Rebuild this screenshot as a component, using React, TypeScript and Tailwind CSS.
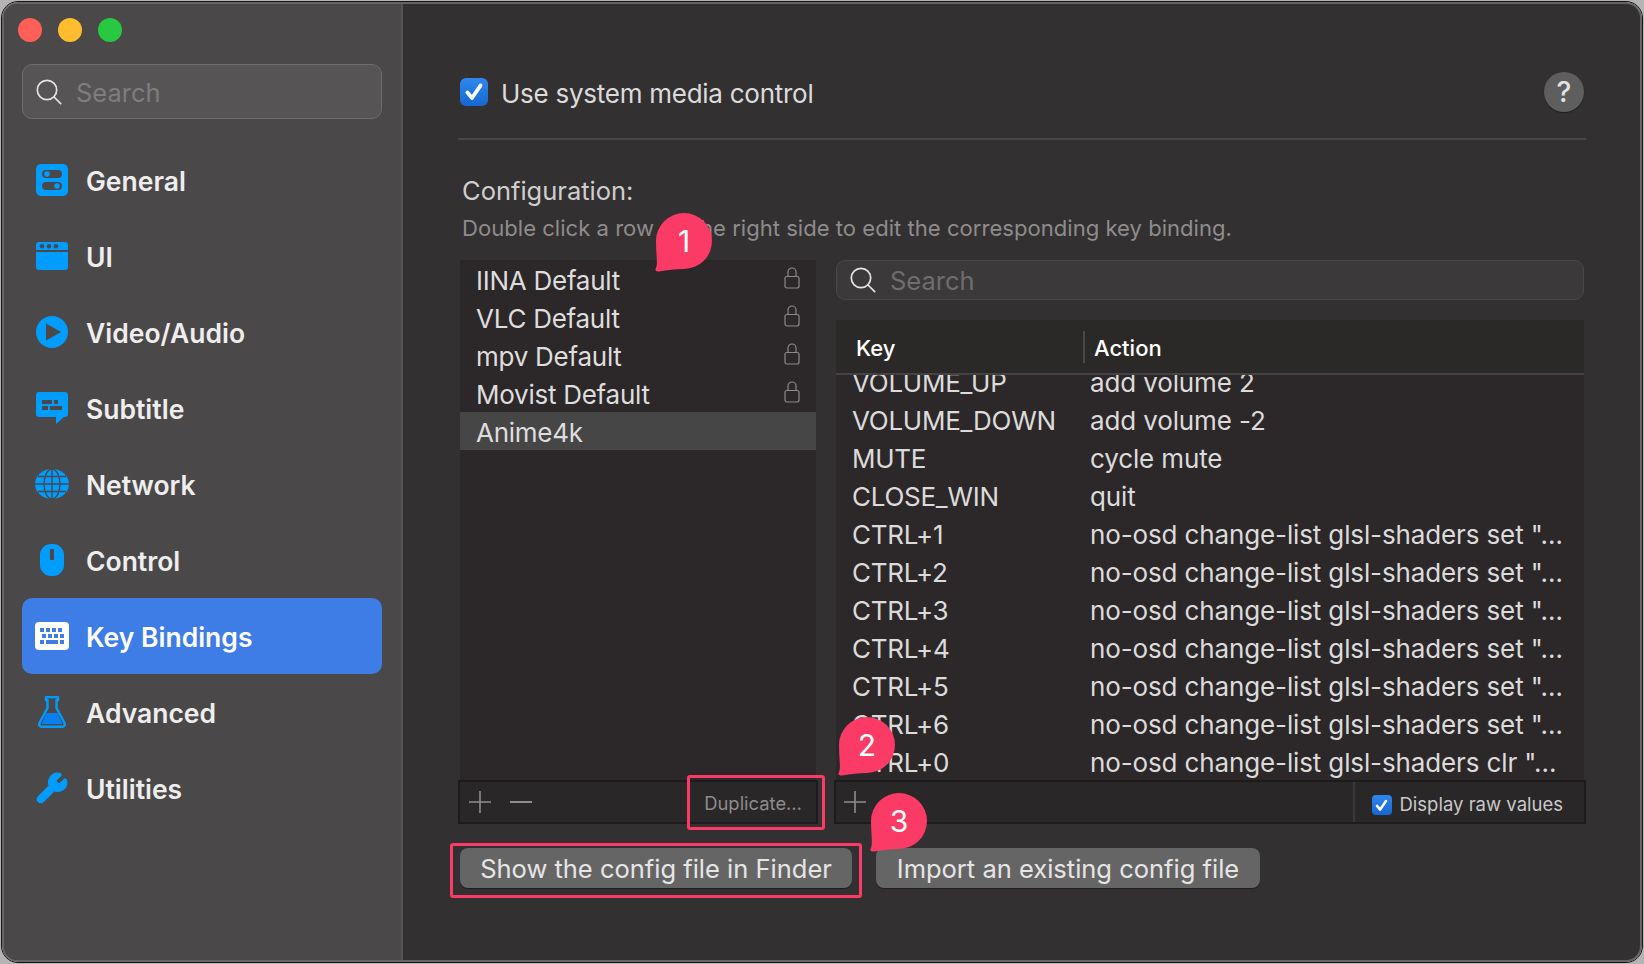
import { Wrench } from 'lucide-react'
import type { ReactNode } from 'react'

const DARK = '#4b4849'
const BLUE = '#009dff'

const GeneralIcon = () => (
  <svg width="32" height="32" viewBox="0 0 32 32">
    <rect width="32" height="32" rx="5" fill={BLUE} />
    <rect x="6" y="6" width="20" height="8" rx="4" fill={DARK} />
    <circle cx="11" cy="10" r="2.8" fill={BLUE} />
    <rect x="6" y="18" width="20" height="8" rx="4" fill={DARK} />
    <circle cx="21" cy="22" r="2.8" fill={BLUE} />
  </svg>
)

const UiIcon = () => (
  <svg width="32" height="28" viewBox="0 0 32 28">
    <path d="M3 0h26a3 3 0 0 1 3 3v5H0V3a3 3 0 0 1 3-3z" fill={BLUE} />
    <path d="M0 10h32v15a3 3 0 0 1-3 3H3a3 3 0 0 1-3-3z" fill={BLUE} />
    <circle cx="6" cy="4.300" r="2.3" fill={DARK} />
    <circle cx="13" cy="4.300" r="2.3" fill={DARK} />
    <circle cx="20" cy="4.300" r="2.3" fill={DARK} />
  </svg>
)

const PlayIcon = () => (
  <svg width="32" height="32" viewBox="0 0 32 32">
    <circle cx="16" cy="16" r="16" fill={BLUE} />
    <path d="M10 7.500 25 16 10 24.500z" fill={DARK} />
  </svg>
)

const SubtitleIcon = () => (
  <svg width="32" height="32" viewBox="0 0 32 32">
    <path d="M3 0h26a3 3 0 0 1 3 3v19a3 3 0 0 1-3 3h-1l-8 7v-7H3a3 3 0 0 1-3-3V3a3 3 0 0 1 3-3z" fill={BLUE} />
    <rect x="6" y="8" width="10" height="4" fill={DARK} />
    <rect x="18" y="8" width="4" height="4" fill={DARK} />
    <rect x="6" y="14" width="6" height="4" fill={DARK} />
    <rect x="14" y="14" width="12" height="4" fill={DARK} />
  </svg>
)

const GlobeIcon = () => (
  <svg width="34" height="30" viewBox="0 0 34 30">
    <ellipse cx="17" cy="15" rx="17" ry="15" fill={BLUE} />
    <g fill="none" stroke={DARK} strokeWidth="1.4">
      <ellipse cx="17" cy="15" rx="8" ry="15" />
      <path d="M17 0v30M3 7.500h28M0 15h34M3 22.500h28" />
    </g>
  </svg>
)

const MouseIcon = () => (
  <svg width="24" height="32" viewBox="0 0 24 32">
    <rect width="24" height="32" rx="11" fill={BLUE} />
    <rect x="10" y="5" width="4" height="11" rx="1" fill={DARK} />
  </svg>
)

const KeyboardIcon = () => {
  const keys = [
    [5, 6, 4], [11, 6, 4], [17, 6, 4], [23, 6, 4],
    [7, 12, 4], [13, 12, 4], [19, 12, 4], [25, 12, 4],
    [5, 18, 4], [11, 18, 12], [25, 18, 4],
  ]
  return (
    <svg width="34" height="28" viewBox="0 0 34 28">
      <rect width="34" height="28" rx="4" fill="#ffffff" />
      {keys.map(([x, y, w]) => (
        <rect key={`${x}-${y}`} x={x} y={y} width={w} height="4" fill="#3f7ce6" />
      ))}
    </svg>
  )
}

const FlaskIcon = () => (
  <svg width="28" height="32" viewBox="0 0 28 32">
    <path d="M8 1h12v3h-1.500v8L26.500 27a2.600 2.600 0 0 1-2.300 3.800H3.800A2.600 2.600 0 0 1 1.500 27L9.500 12V4H8z" fill="none" stroke={BLUE} strokeWidth="2.4" strokeLinejoin="round" />
    <path d="M8.500 17h11l5 11H3.500z" fill="#0a7fee" />
  </svg>
)

const nav: { label: string; icon: ReactNode; active?: boolean }[] = [
  { label: 'General', icon: <GeneralIcon /> },
  { label: 'UI', icon: <UiIcon /> },
  { label: 'Video/Audio', icon: <PlayIcon /> },
  { label: 'Subtitle', icon: <SubtitleIcon /> },
  { label: 'Network', icon: <GlobeIcon /> },
  { label: 'Control', icon: <MouseIcon /> },
  { label: 'Key Bindings', icon: <KeyboardIcon />, active: true },
  { label: 'Advanced', icon: <FlaskIcon /> },
  { label: 'Utilities', icon: <Wrench size={36} strokeWidth={1.6} fill={BLUE} color={BLUE} /> },
]

const presets = [
  { name: 'IINA Default', locked: true },
  { name: 'VLC Default', locked: true },
  { name: 'mpv Default', locked: true },
  { name: 'Movist Default', locked: true },
  { name: 'Anime4k', selected: true },
]

const SET = 'no-osd change-list glsl-shaders set "…'
const bindings = [
  ['VOLUME_UP', 'add volume 2'],
  ['VOLUME_DOWN', 'add volume -2'],
  ['MUTE', 'cycle mute'],
  ['CLOSE_WIN', 'quit'],
  ['CTRL+1', SET],
  ['CTRL+2', SET],
  ['CTRL+3', SET],
  ['CTRL+4', SET],
  ['CTRL+5', SET],
  ['CTRL+6', SET],
  ['CTRL+0', 'no-osd change-list glsl-shaders clr "…'],
]

const SearchGlyph = () => (
  <svg width="26" height="26" viewBox="0 0 26 26" fill="none" stroke="#e4e3e3" strokeWidth="1.7" strokeLinecap="round">
    <circle cx="11" cy="11" r="9.700" />
    <path d="M18 18l6.700 6.700" />
  </svg>
)

const LockGlyph = () => (
  <svg width="16" height="22" viewBox="0 0 16 22" fill="none" stroke="#8b8989" strokeWidth="1.2">
    <rect x="1" y="9.500" width="14" height="11.500" rx="2" />
    <path d="M4 9.500V5a4 4 0 0 1 8 0v4.500" />
  </svg>
)

const CheckBox = ({ size }: { size: 'lg' | 'sm' }) => (
  <span
    className={
      size === 'lg'
        ? 'flex h-[28px] w-[28px] items-center justify-center rounded-[6px] bg-linear-to-b from-[#2f88ee] to-[#1667d0]'
        : 'flex h-[20px] w-[20px] items-center justify-center rounded-[4px] bg-linear-to-b from-[#2f88ee] to-[#1667d0]'
    }
  >
    <svg
      width={size === 'lg' ? 22 : 15}
      height={size === 'lg' ? 22 : 15}
      viewBox="0 0 20 20"
      fill="none"
      stroke="#ffffff"
      strokeWidth="3.4"
      strokeLinecap="round"
      strokeLinejoin="round"
    >
      <path d="M4 10.500l4.200 5L16 4" />
    </svg>
  </span>
)

const PlusGlyph = () => (
  <svg width="22" height="22" viewBox="0 0 22 22" stroke="#8f8d8d" strokeWidth="1.6">
    <path d="M11 0v22M0 11h22" />
  </svg>
)

const Bubble = ({ n, className }: { n: number; className: string }) => (
  <div className={`absolute flex h-[60px] w-[60px] ${className}`}>
    <svg width="60" height="60" viewBox="0 0 60 60" className="absolute inset-0">
      <path
        d="M31 1a28 28 0 1 1 0 56c-8 0-17 1-25 2.500-3 .5-4.500-1.500-3-3.500C5 52 3 42 3 29A28 28 0 0 1 31 1z"
        fill="#fb3a65"
      />
    </svg>
    <span className="relative ml-[3px] mt-[1px] flex h-[56px] w-[56px] items-center justify-center text-[30px] leading-none text-white">
      {n}
    </span>
  </div>
)

const App = () => {
  return (
    <div className="relative h-[964px] w-[1644px] overflow-hidden bg-[#b4b4b4] p-px font-['Inter',sans-serif]">
      <div className="h-full w-full rounded-[17px] border border-[#161616]">
        <div className="flex h-full w-full overflow-hidden rounded-[16px] border-2 border-[#666465] bg-[#333031]">
          <aside className="flex h-full w-[399px] shrink-0 flex-col border-r-2 border-[#575455] bg-[#4b4849] pl-[18px] pr-[19px] pt-[14px]">
            <div className="-ml-[4px] flex gap-4">
              <span className="h-6 w-6 rounded-full bg-[#ff5f57]" />
              <span className="h-6 w-6 rounded-full bg-[#febc2e]" />
              <span className="h-6 w-6 rounded-full bg-[#28c840]" />
            </div>

            <div className="mt-[22px] flex h-[55px] items-center rounded-[10px] border border-[#6f6c6d] bg-[#575455] pl-[13px]">
              <SearchGlyph />
              <span className="ml-[14px] pt-[4px] text-[25.500px] text-[#7f7d7d]">Search</span>
            </div>

            <nav className="mt-[23px] flex flex-col">
              {nav.map((item) => (
                <div
                  key={item.label}
                  className={`flex h-[76px] items-center rounded-[10px] pl-[13px] ${item.active ? 'bg-[#3e7ce6] text-white' : 'text-[#eeeeee]'}`}
                >
                  <span className="flex w-[34px] items-center justify-center">{item.icon}</span>
                  <span className="ml-[17px] pt-[4px] text-[26.500px] font-semibold">{item.label}</span>
                </div>
              ))}
            </nav>
          </aside>

          <main className="flex min-w-0 flex-1 flex-col pl-[55px] pr-[54px] pt-[68px]">
            <div className="flex h-[40px] items-center justify-between pl-[2px] pr-[2px]">
              <div className="flex items-center gap-[13px]">
                <CheckBox size="lg" />
                <span className="pt-[2px] text-[26px] tracking-[-0.01em] text-[#dcdbdb]">Use system media control</span>
              </div>
              <span className="flex h-[40px] w-[40px] items-center justify-center rounded-full bg-[#5f5e5e] text-[28px] font-medium text-[#e2e2e2] shadow-[0_1px_1px_rgba(0,0,0,0.4)]">
                ?
              </span>
            </div>

            <div className="mt-[26px] h-[2px] bg-[#4a4748]" />

            <p className="ml-[4px] mt-[33px] text-[25.500px] leading-[36px] text-[#cfcece]">Configuration:</p>
            <p className="ml-[4px] mt-[3px] text-[22.100px] leading-[32px] text-[#8e8c8c]">
              Double click a row on the right side to edit the corresponding key binding.
            </p>

            <div className="mt-[16px] grid grid-cols-[360px_752px] gap-x-[16px]">
              <div className="flex flex-col">
                <div className="mx-[2px] h-[520px] bg-[#2c2829]">
                  {presets.map((p) => (
                    <div
                      key={p.name}
                      className={`flex h-[38px] items-center justify-between pl-[16px] pr-[16px] text-[26px] tracking-[-0.01em] text-[#dedddd] ${p.selected ? 'bg-[#474646]' : ''}`}
                    >
                      <span className="pt-[2px]">{p.name}</span>
                      {p.locked && <span className="-mt-[2px]"><LockGlyph /></span>}
                    </div>
                  ))}
                </div>
                <div className="flex h-[44px] items-center border-2 border-[#1d1b1c] bg-[#2a2728] pl-[9px] pr-[14px]">
                  <PlusGlyph />
                  <span className="ml-[19px] h-[2px] w-[22px] bg-[#8f8d8d]" />
                  <span className="ml-auto pt-[4px] text-[18.400px] text-[#8d8b8b]">Duplicate…</span>
                </div>
              </div>

              <div className="flex flex-col">
                <div className="mx-[2px] flex h-[40px] items-center rounded-[9px] border border-[#4a4748] bg-[#3c393a] pl-[13px]">
                  <SearchGlyph />
                  <span className="ml-[14px] pt-[2px] text-[25.500px] text-[#6f6d6d]">Search</span>
                </div>

                <div className="mx-[2px] mt-[20px] flex h-[460px] flex-col bg-[#2c2829]">
                  <div className="flex h-[55px] shrink-0 items-center border-b-2 border-[#454243] bg-[#2b2928] text-[22px] font-medium text-white">
                    <span className="w-[247px] pl-[20px] pt-[4px]">Key</span>
                    <span className="h-[32px] w-[2px] bg-[#4a4748]" />
                    <span className="pl-[9px] pt-[4px]">Action</span>
                  </div>
                  <div className="min-h-0 flex-1 overflow-hidden">
                    <div className="-mt-[12px]">
                      {bindings.map(([key, action]) => (
                        <div key={key} className="flex h-[38px] items-center text-[26px] tracking-[-0.01em] text-[#dcdbdb]">
                          <span className="w-[254px] shrink-0 pl-[16px]">{key}</span>
                          <span className="whitespace-nowrap tracking-[-0.005em]">{action}</span>
                        </div>
                      ))}
                    </div>
                  </div>
                </div>

                <div className="flex h-[44px] items-center border-2 border-[#1d1b1c] bg-[#2a2728]">
                  <span className="ml-[8px]">
                    <PlusGlyph />
                  </span>
                  <span className="ml-auto h-full w-[2px] bg-[#3a3738]" />
                  <span className="ml-[17px] mr-[21px] flex items-center gap-[8px] pt-[6px]">
                    <CheckBox size="sm" />
                    <span className="text-[18.500px] text-[#c9c8c8]">Display raw values</span>
                  </span>
                </div>
              </div>
            </div>

            <div className="mt-[24px] flex gap-[24px] pl-[2px]">
              <button className="h-[40px] w-[392px] rounded-[8px] bg-[#666565] pt-[2px] text-[25.500px] text-[#e6e5e5] shadow-[0_1px_1px_rgba(0,0,0,0.4)]">
                Show the config file in Finder
              </button>
              <button className="h-[40px] w-[384px] rounded-[8px] bg-[#666565] pt-[2px] text-[25.500px] text-[#e6e5e5] shadow-[0_1px_1px_rgba(0,0,0,0.4)]">
                Import an existing config file
              </button>
            </div>
          </main>
        </div>
      </div>

      <div className="pointer-events-none absolute left-[687px] top-[775px] h-[55px] w-[138px] rounded-[3px] border-[3px] border-[#fb3a65]" />
      <div className="pointer-events-none absolute left-[450px] top-[843px] h-[55px] w-[412px] rounded-[3px] border-[3px] border-[#fb3a65]" />
      <Bubble n={1} className="left-[653px] top-[212px]" />
      <Bubble n={2} className="left-[836px] top-[716px]" />
      <Bubble n={3} className="left-[868px] top-[792px]" />
    </div>
  )
}

export default App
